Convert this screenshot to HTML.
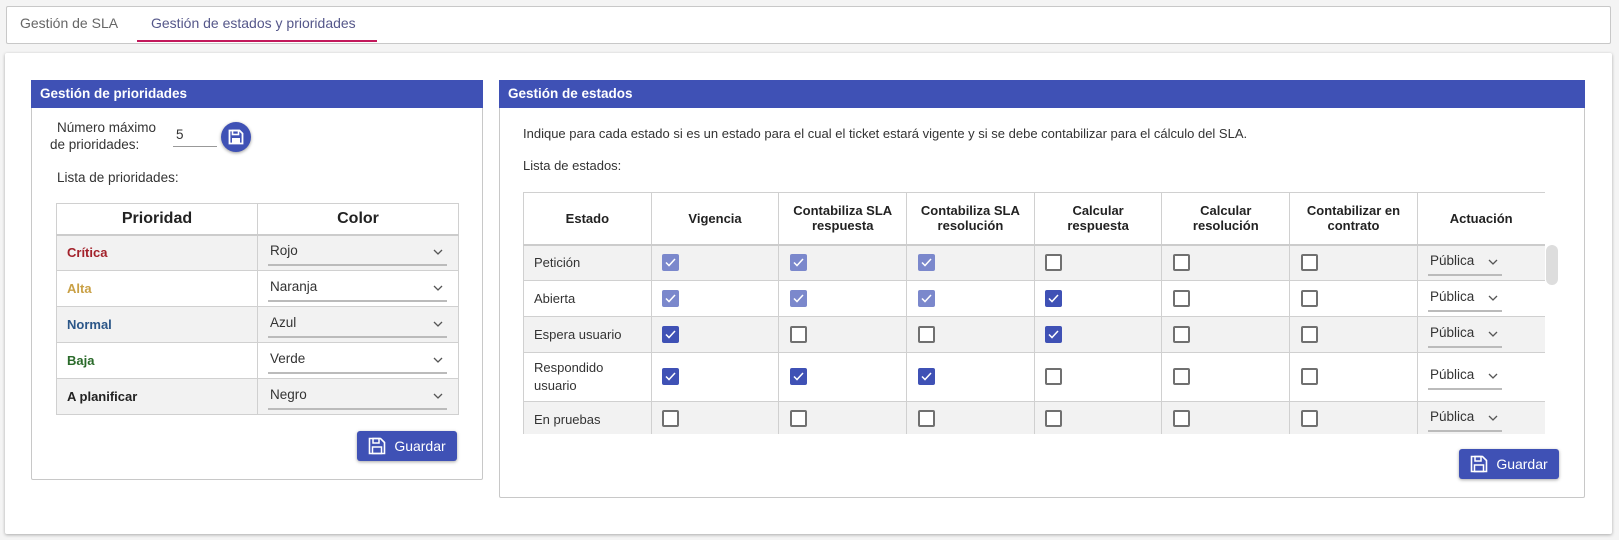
<!DOCTYPE html>
<html><head><meta charset="utf-8"><style>
*{box-sizing:border-box;margin:0;padding:0}
body{width:1619px;height:540px;background:#f4f4f4;font-family:"Liberation Sans",Arial,sans-serif;color:#333;position:relative;overflow:hidden;font-size:13px}
.a{position:absolute}
.hdr{background:#3f51b5;color:#fff;font-weight:bold;font-size:13.5px;padding:5px 9px;height:28px;line-height:18px}
.panel{background:#fff;border:1px solid #c8c8c8;border-radius:2px}
table{border-collapse:collapse;position:absolute;table-layout:fixed}
td,th{border:1px solid #d0d0d0}
.cb{position:absolute;width:17px;height:17px;border-radius:2px}
.u{border:2px solid #707070;background:#fff}
.l{background:#7b88cc}
.d{background:#3f51b5}
.cb svg{position:absolute;left:2px;top:3px}
.btn{background:#3f51b5;color:#fff;border-radius:3px;box-shadow:0 1px 3px rgba(0,0,0,.35);font-size:14px;display:flex;align-items:center;justify-content:center;gap:8px}
.sel{position:absolute;border-bottom:2px solid #bbb;height:25px;line-height:20px;font-size:13.5px;color:#333}
.sel svg{position:absolute;right:4px;top:8px}
</style></head><body>
<div class="a" style="left:6px;top:6px;width:1605px;height:38px;background:#fff;border:1px solid #c8c8c8;border-radius:2px"></div>
<div class="a" style="left:20px;top:15px;font-size:14px;color:#666">Gestión de SLA</div>
<div class="a" style="left:151px;top:15px;font-size:14px;color:#55578a">Gestión de estados y prioridades</div>
<div class="a" style="left:137px;top:40px;width:240px;height:2px;background:#c2185b"></div>
<div class="a" style="left:5px;top:53px;width:1607px;height:481px;background:#fff;box-shadow:0 1px 3px rgba(0,0,0,.3);border-radius:2px"></div>

<div class="a panel" style="left:31px;top:80px;width:452px;height:400px"></div>
<div class="a hdr" style="left:31px;top:80px;width:452px">Gestión de prioridades</div>
<div class="a" style="left:57px;top:120px;font-size:13.5px">Número máximo</div>
<div class="a" style="left:50px;top:137px;font-size:13.5px">de prioridades:</div>
<div class="a" style="left:176px;top:127px;font-size:13.5px">5</div>
<div class="a" style="left:173px;top:146px;width:44px;height:1px;background:#999"></div>
<div class="a" style="left:221px;top:122px;width:30px;height:30px;border-radius:50%;background:#3f51b5;box-shadow:0 1px 3px rgba(0,0,0,.4)">
<svg width="30" height="30" viewBox="0 0 30 30"><path d="M8.5 8.5h10l3 3v10h-13z" fill="none" stroke="#fff" stroke-width="1.8"/><rect x="11.5" y="8.5" width="6" height="4" fill="none" stroke="#fff" stroke-width="1.6"/><rect x="11" y="16" width="8" height="5.5" fill="#fff"/></svg></div>
<div class="a" style="left:57px;top:170px;font-size:13.5px">Lista de prioridades:</div>
<table style="left:56px;top:203px;width:402px">
<colgroup><col style="width:201px"><col style="width:201px"></colgroup>
<tr style="height:31px;border-bottom:2px solid #ccc"><th style="font-size:16px;color:#222">Prioridad</th><th style="font-size:16px;color:#222">Color</th></tr>
<tr style="height:36px;background:#f2f2f2"><td style="padding-left:10px;font-weight:bold;color:#a3222b">Crítica</td><td></td></tr>
<tr style="height:36px"><td style="padding-left:10px;font-weight:bold;color:#c9a045">Alta</td><td></td></tr>
<tr style="height:36px;background:#f2f2f2"><td style="padding-left:10px;font-weight:bold;color:#2b5688">Normal</td><td></td></tr>
<tr style="height:36px"><td style="padding-left:10px;font-weight:bold;color:#2a6a2a">Baja</td><td></td></tr>
<tr style="height:36px;background:#f2f2f2"><td style="padding-left:10px;font-weight:bold;color:#222">A planificar</td><td></td></tr>
</table>
<div id="lsel"></div>
<div class="a btn" style="left:357px;top:431px;width:100px;height:30px"><svg width="18" height="18" viewBox="0 0 18 18"><path d="M1.5 1.5h11l4 4v11h-15z" fill="none" stroke="#fff" stroke-width="1.6"/><rect x="5" y="1.5" width="6" height="4.5" fill="none" stroke="#fff" stroke-width="1.5"/><rect x="4.5" y="10" width="9" height="6.5" fill="none" stroke="#fff" stroke-width="1.5"/></svg>Guardar</div>

<div class="a panel" style="left:499px;top:80px;width:1086px;height:418px"></div>
<div class="a hdr" style="left:499px;top:80px;width:1086px">Gestión de estados</div>
<div class="a" style="left:523px;top:126px;font-size:13px">Indique para cada estado si es un estado para el cual el ticket estará vigente y si se debe contabilizar para el cálculo del SLA.</div>
<div class="a" style="left:523px;top:158px;font-size:13px">Lista de estados:</div>
<div class="a" style="left:523px;top:192px;width:1022px;height:242px;overflow:hidden">
<table style="left:0;top:0;width:1022px">
<colgroup><col span="8" style="width:127.7px"></colgroup>
<tr style="height:52px;border-bottom:2px solid #ccc;font-size:13px;color:#222"><th>Estado</th><th>Vigencia</th><th>Contabiliza SLA<br>respuesta</th><th>Contabiliza SLA<br>resolución</th><th>Calcular<br>respuesta</th><th>Calcular<br>resolución</th><th>Contabilizar en<br>contrato</th><th>Actuación</th></tr>
<tr style="height:36px;background:#f2f2f2"><td style="padding-left:10px">Petición</td><td></td><td></td><td></td><td></td><td></td><td></td><td></td></tr>
<tr style="height:36px"><td style="padding-left:10px">Abierta</td><td></td><td></td><td></td><td></td><td></td><td></td><td></td></tr>
<tr style="height:36px;background:#f2f2f2"><td style="padding-left:10px">Espera usuario</td><td></td><td></td><td></td><td></td><td></td><td></td><td></td></tr>
<tr style="height:49px"><td style="padding-left:10px;line-height:18px">Respondido<br>usuario</td><td></td><td></td><td></td><td></td><td></td><td></td><td></td></tr>
<tr style="height:36px;background:#f2f2f2"><td style="padding-left:10px">En pruebas</td><td></td><td></td><td></td><td></td><td></td><td></td><td></td></tr>
</table>
</div>
<div class="a" style="left:1546px;top:245px;width:12px;height:40px;background:#ddd;border-radius:6px"></div>
<div id="cbs"></div>
<div class="a btn" style="left:1459px;top:449px;width:100px;height:30px"><svg width="18" height="18" viewBox="0 0 18 18"><path d="M1.5 1.5h11l4 4v11h-15z" fill="none" stroke="#fff" stroke-width="1.6"/><rect x="5" y="1.5" width="6" height="4.5" fill="none" stroke="#fff" stroke-width="1.5"/><rect x="4.5" y="10" width="9" height="6.5" fill="none" stroke="#fff" stroke-width="1.5"/></svg>Guardar</div>
<script>
var chev='<svg width="10" height="6" viewBox="0 0 10 6"><path d="M1 1l4 4 4-4" fill="none" stroke="#555" stroke-width="1.3"/></svg>';
var rows=[[262,"LLLUUU"],[298,"LLLDUU"],[334,"DUUDUU"],[376,"DDDUUU"],[418,"UUUUUU"]];
var cols=[662,790,918,1045,1173,1301];
var h="";
rows.forEach(function(r){for(var i=0;i<6;i++){var s=r[1][i];var c=s=="L"?"l":s=="D"?"d":"u";
h+='<div class="cb '+c+'" style="left:'+cols[i]+'px;top:'+(r[0]-8)+'px">'+(c!="u"?'<svg width="13" height="11" viewBox="0 0 13 11"><path d="M2 5.5l3 3 6-6.5" fill="none" stroke="#fff" stroke-width="1.5"/></svg>':'')+'</div>';}
h+='<div class="sel" style="left:1428px;top:'+(r[0]-11)+'px;width:74px;padding-left:2px">Pública'+chev+'</div>';});
document.getElementById("cbs").innerHTML=h;
var names=["Rojo","Naranja","Azul","Verde","Negro"],g="";
names.forEach(function(n,i){g+='<div class="sel" style="left:268px;top:'+(241+36*i)+'px;width:179px;padding-left:2px">'+n+chev+'</div>';});
document.getElementById("lsel").innerHTML=g;
</script>
</body></html>
